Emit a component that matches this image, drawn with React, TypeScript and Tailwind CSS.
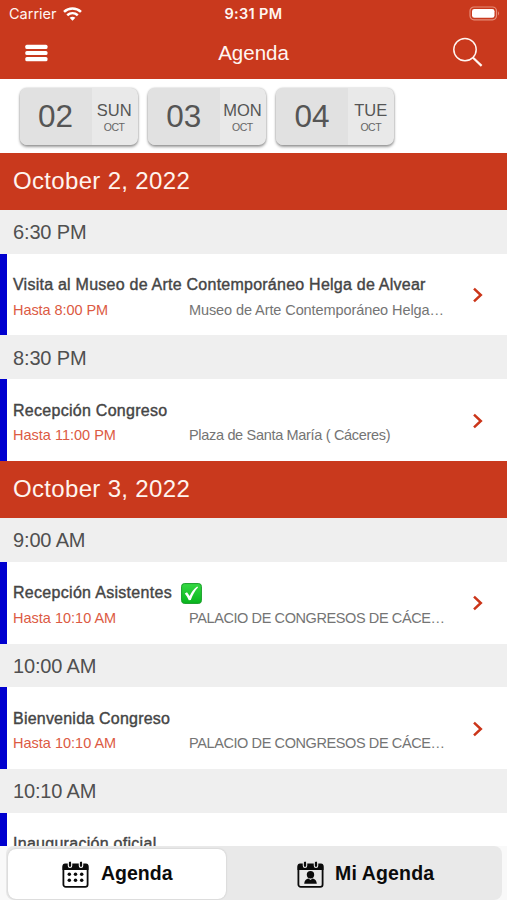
type Talk = { title: string; until: string; place: string; check?: boolean; tw: string; uw: string; pw: string };

const card = 'flex h-[57.5px] w-[118.3px] shrink-0 overflow-hidden rounded-[7px] bg-[#e9e9e9] shadow-[0_2px_3px_rgba(0,0,0,0.38),0_0_2px_rgba(0,0,0,0.25)]';

function DateCard({ num, day }: { num: string; day: string }) {
  return (
    <button className={card}>
      <span className="flex h-full w-[72px] items-center justify-center bg-[#e1e1e1] pt-[1px] text-[31.5px] text-[#555]">{num}</span>
      <span className="flex flex-1 flex-col items-center pt-[13px] text-[#555]">
        <span className="-ml-[1px] text-[16.5px] leading-[18px]">{day}</span>
        <span className="-ml-[1px] mt-[2px] text-[10.5px] leading-[12px] tracking-[-0.5px] text-[#666]">OCT</span>
      </span>
    </button>
  );
}

function SectionHeader({ children }: { children: string }) {
  return (
    <h2 className="flex h-[57.3px] shrink-0 items-center bg-[#c9391d] pl-[13px] text-[24px] tracking-[0.33px] text-[#fff4ee]">{children}</h2>
  );
}

function TimeHeader({ children }: { children: string }) {
  return (
    <h3 className="flex h-[43.8px] shrink-0 items-center bg-[#efefef] pl-[13px] pt-[1px] text-[20px] tracking-[-0.15px] text-[#505050]">{children}</h3>
  );
}

function CheckEmoji() {
  return (
    <svg className="ml-[9px] h-[21px] w-[21px] shrink-0" viewBox="0 0 21 21">
      <defs>
        <linearGradient id="green" x1="0" y1="0" x2="0" y2="1">
          <stop offset="0" stopColor="#35d943" />
          <stop offset="1" stopColor="#08b51d" />
        </linearGradient>
      </defs>
      <rect x=".6" y=".6" width="19.8" height="19.8" rx="2.8" fill="url(#green)" stroke="#179d28" strokeWidth="1" />
      <path d="M3.8 10.5 6 9.2 8.7 13C10.400 9.500 12.700 6.200 16.200 3.600L17.100 4.300C13.800 8 11.500 12.100 9.800 16.900L7.800 17.300C6.800 14.800 5.500 12.500 3.800 10.500Z" fill="#fff" />
    </svg>
  );
}

function Item({ talk }: { talk: Talk }) {
  return (
    <article className="flex h-[81.7px] shrink-0 items-start border-l-[7px] border-[#0000cf] bg-white pl-[6px]">
      <div className="w-[446px] shrink-0 pt-[20px]">
        <div className="flex h-[23px] items-center whitespace-nowrap text-[16px] text-[#454545] [-webkit-text-stroke:0.4px_#454545]">
          <span className={talk.tw}>{talk.title}</span>
          {talk.check && <CheckEmoji />}
        </div>
        {talk.until && (
          <div className="mt-[4px] flex h-[20px] items-center whitespace-nowrap text-[14.5px]">
            <span className="w-[176px] shrink-0 text-[#dc5a43]"><span className={talk.uw}>{talk.until}</span></span>
            <span className={'text-[#747474] ' + talk.pw}>{talk.place}</span>
          </div>
        )}
      </div>
      {talk.until && (
        <svg className="ml-[12.5px] mt-[33.500px] h-[16px] w-[12px]" viewBox="0 0 12 16" fill="none" stroke="#cb3519" strokeWidth="2.5">
          <path d="M2 1.7 8.8 8 2 14.3" />
        </svg>
      )}
    </article>
  );
}

function CalendarIcon({ person }: { person?: boolean }) {
  return (
    <svg className="h-[27px] w-[27px] shrink-0" viewBox="0 0 27 27">
      <rect x="1.4" y="4" width="24.2" height="21.8" rx="2.4" fill="none" stroke="#0b0b0b" strokeWidth="1.8" />
      <path d="M.5 9V5Q.5 2.500 3 2.500H24Q26.500 2.500 26.500 5V9Z" fill="#0b0b0b" />
      <g fill="#0b0b0b" stroke={person ? '#e9e9e9' : '#fff'} strokeWidth="1.1">
        <rect x="6.3" y="0" width="3.4" height="6.500" rx="1.700" />
        <rect x="17.300" y="0" width="3.400" height="6.500" rx="1.700" />
      </g>
      {person ? (
        <g fill="#0b0b0b">
          <circle cx="13.500" cy="13.700" r="3.700" />
          <path d="M7.200 22.800C7.200 19.500 9.400 18 11.500 17.500L13.500 19 15.500 17.500C17.600 18 19.800 19.500 19.800 22.800Z" />
        </g>
      ) : (
        <g fill="#0b0b0b">
          {[13, 19].map((y) =>
            [7.300, 13.500, 19.700].map((x) => <circle key={x + '-' + y} cx={x} cy={y + 0.300} r="1.750" />),
          )}
        </g>
      )}
    </svg>
  );
}

const talks: Talk[] = [
  { title: 'Visita al Museo de Arte Contemporáneo Helga de Alvear', until: 'Hasta 8:00 PM', place: 'Museo de Arte Contemporáneo Helga…', tw: 'tracking-[0.24px]', uw: 'tracking-[-0.07px]', pw: 'tracking-[-0.09px]' },
  { title: 'Recepción Congreso', until: 'Hasta 11:00 PM', place: 'Plaza de Santa María ( Cáceres)', tw: 'tracking-[0.28px]', uw: 'tracking-[0px]', pw: 'tracking-[-0.32px]' },
  { title: 'Recepción Asistentes', until: 'Hasta 10:10 AM', place: 'PALACIO DE CONGRESOS DE CÁCE…', check: true, tw: 'tracking-[0.3px]', uw: 'tracking-[0px]', pw: 'tracking-[-0.4px]' },
  { title: 'Bienvenida Congreso', until: 'Hasta 10:10 AM', place: 'PALACIO DE CONGRESOS DE CÁCE…', tw: 'tracking-[0.22px]', uw: 'tracking-[0px]', pw: 'tracking-[-0.4px]' },
  { title: 'Inauguración oficial', until: '', place: '', tw: 'tracking-[0.28px]', uw: '', pw: '' },
];

export default function App() {
  return (
    <div className="flex h-[900px] w-[507px] flex-col overflow-hidden bg-white font-['Liberation_Sans',Arial,sans-serif]">
      <header className="h-[79px] shrink-0 bg-[#c9391d] text-[#fff6f2]">
        <div className="grid h-[27px] grid-cols-3 items-center pl-[9px] pr-[7px] font-[Inter,sans-serif]">
          <div className="flex items-center gap-[6px] text-[14.500px]">
            <span>Carrier</span>
            <svg className="h-[14px] w-[19px]" viewBox="0 0 19 14" fill="none" stroke="#fff" strokeWidth="2.500">
              <path d="M1 4.900C5.800.400 13.200.400 18 4.900" />
              <path d="M4.200 8.200C7.300 5.500 11.700 5.500 14.800 8.200" />
              <path d="M6.600 10.700C8.500 9.300 10.500 9.300 12.400 10.700L9.500 13.700Z" fill="#fff" stroke="none" />
            </svg>
          </div>
          <div className="-ml-[2px] text-center text-[14.500px] font-semibold tracking-[0.35px]">9:31 PM</div>
          <svg className="h-[15px] w-[31px] justify-self-end" viewBox="0 0 31 15">
            <rect x="1" y="1" width="26.500" height="12.800" rx="4" fill="none" stroke="#e58d79" strokeWidth="1.200" />
            <rect x="3" y="3" width="22.500" height="8.800" rx="2.300" fill="#fff" />
            <path d="M29 5.200Q31 7.400 29 9.600Z" fill="#e58d79" />
          </svg>
        </div>
        <div className="grid h-[52px] grid-cols-3 items-center pl-[25px] pr-[23px]">
          <svg className="h-[18px] w-[23px]" viewBox="0 0 23 18" fill="#fff">
            <rect x=".300" y=".700" width="22.200" height="4.200" rx="1.500" />
            <rect x=".300" y="6.900" width="22.200" height="4.200" rx="1.500" />
            <rect x=".300" y="13.100" width="22.200" height="4.200" rx="1.500" />
          </svg>
          <h1 className="-ml-[2px] text-center text-[20.500px]">Agenda</h1>
          <svg className="h-[32px] w-[32px] justify-self-end" viewBox="0 0 32 32" fill="none" stroke="#fff6f2">
            <circle cx="13" cy="12.600" r="11.200" strokeWidth="1.500" />
            <path d="m20.800 20.500 8.800 8.400" strokeWidth="2.200" />
          </svg>
        </div>
      </header>
      <nav className="flex h-[73.500px] shrink-0 gap-[10px] pl-[19.500px] pt-[8.500px]">
        <DateCard num="02" day="SUN" />
        <DateCard num="03" day="MON" />
        <DateCard num="04" day="TUE" />
      </nav>
      <main className="flex h-[693.500px] shrink-0 flex-col overflow-hidden">
        <SectionHeader>October 2, 2022</SectionHeader>
        <TimeHeader>6:30 PM</TimeHeader>
        <Item talk={talks[0]} />
        <TimeHeader>8:30 PM</TimeHeader>
        <Item talk={talks[1]} />
        <SectionHeader>October 3, 2022</SectionHeader>
        <TimeHeader>9:00 AM</TimeHeader>
        <Item talk={talks[2]} />
        <TimeHeader>10:00 AM</TimeHeader>
        <Item talk={talks[3]} />
        <TimeHeader>10:10 AM</TimeHeader>
        <Item talk={talks[4]} />
      </main>
      <footer className="flex h-[54px] shrink-0 bg-[#f9f9f9] pl-[6px] pr-[5px]">
        <div className="flex flex-1 rounded-[8px] bg-[#e9e9e9] pb-[1px] pl-[2px] pt-[3px] text-[19.500px] font-bold text-[#0b0b0b]">
          <button className="flex w-[218px] items-center rounded-[8px] bg-white pl-[54px] shadow-[0_0_2px_rgba(0,0,0,0.2)]">
            <CalendarIcon />
            <span className="ml-[12px]">Agenda</span>
          </button>
          <button className="flex flex-1 items-center pl-[71px]">
            <CalendarIcon person />
            <span className="ml-[11px] tracking-[0.15px]">Mi Agenda</span>
          </button>
        </div>
      </footer>
    </div>
  );
}
